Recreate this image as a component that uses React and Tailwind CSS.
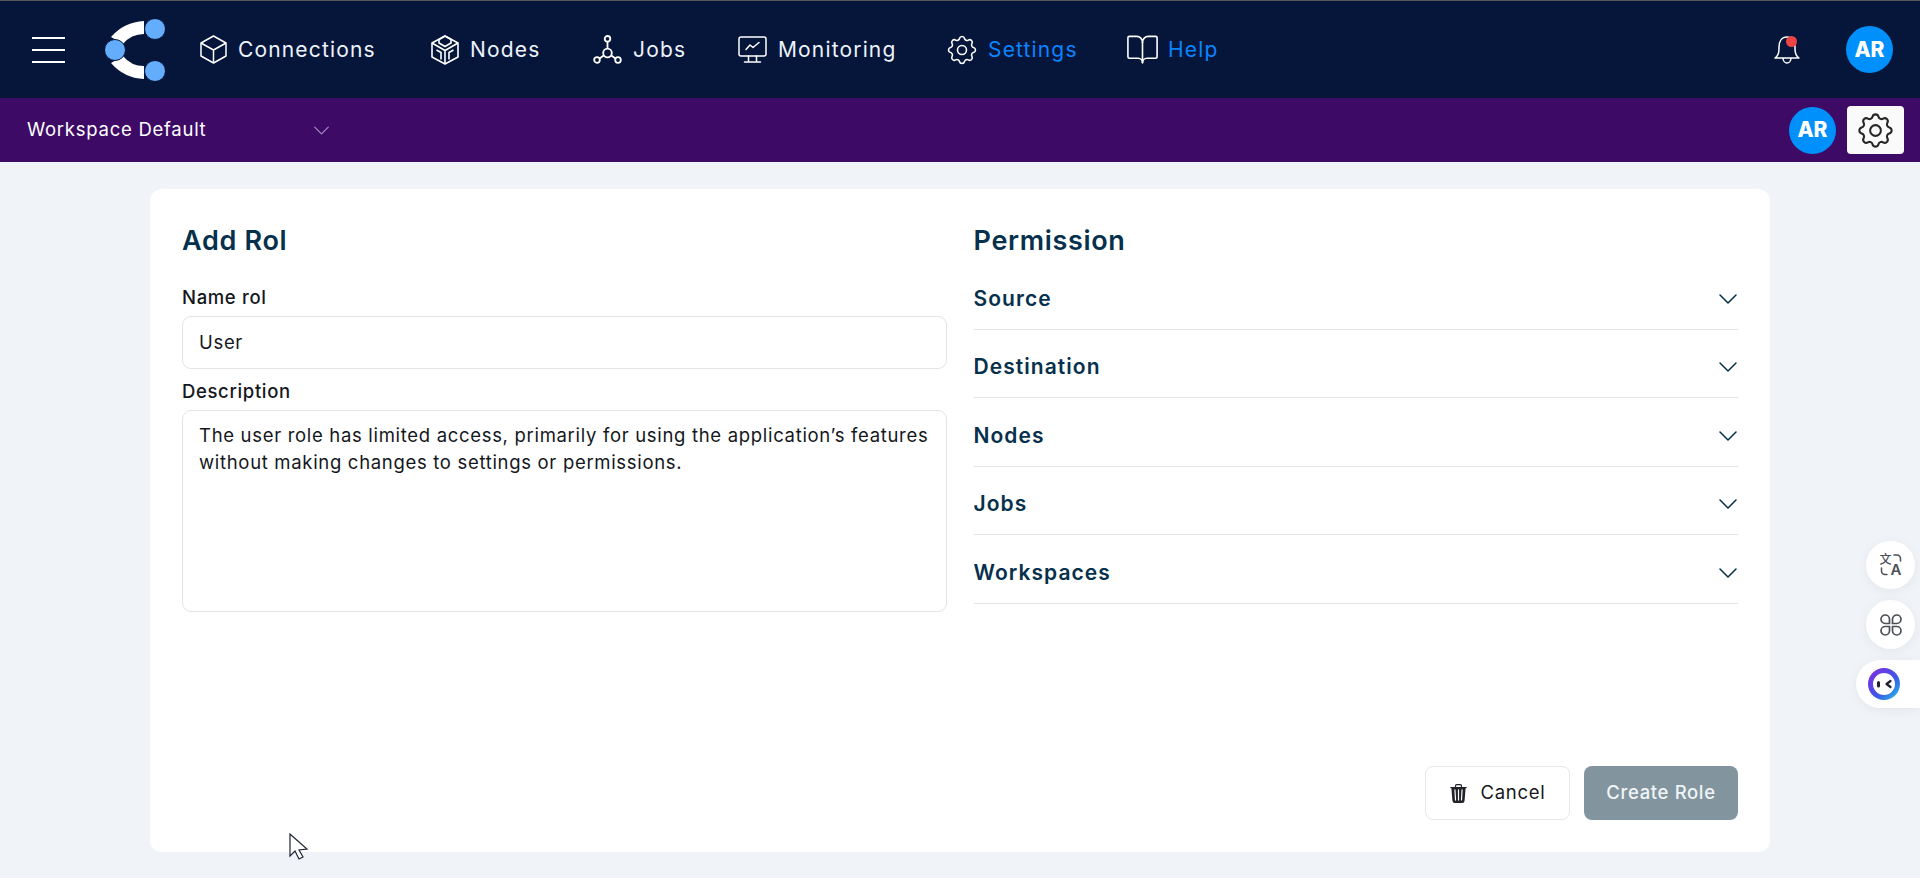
import { ChevronDown } from "lucide-react";
import { TbSettings } from "react-icons/tb";
import { LuBookOpen } from "react-icons/lu";
import { BsTrash3Fill } from "react-icons/bs";

const font = { fontFamily: "Inter, sans-serif" };

function CubeIcon() {
  return (
    <svg width="27" height="29" viewBox="0 0 27 29" fill="none" stroke="white" strokeWidth="1.500" strokeLinejoin="round">
      <path d="M13.500 1 26 8v13l-12.500 7L1 21V8z" />
      <path d="M1 8l12.500 7L26 8M13.500 15v13" />
    </svg>
  );
}

function NodesIcon() {
  return (
    <svg width="28" height="30" viewBox="0 0 28 30" fill="none" stroke="white" strokeWidth="1.600" strokeLinejoin="round">
      <path d="M14 1 27 8v14l-13 7L1 22V8z" />
      <path d="M14 1 8 4.500v3.500l6 3.500 6-3.500V4.500z" />
      <path d="M1 8l13 7.500L27 8M14 15.500V29" />
      <path d="M5.500 15l4.500 2.500v7M22.500 15 18 17.500v7" />
    </svg>
  );
}

function JobsIcon() {
  return (
    <svg width="29" height="29" viewBox="0 0 29 29" fill="none" stroke="white" strokeWidth="1.800">
      <circle cx="14.500" cy="3.800" r="2.800" />
      <circle cx="14.500" cy="18" r="4.300" />
      <circle cx="4" cy="25" r="2.800" />
      <circle cx="25" cy="25" r="2.800" />
      <path d="M14.500 6.600V13.700M10.700 20.500 6.500 23.500M18.300 20.500 22.500 23.500" />
    </svg>
  );
}

function MonitorIcon() {
  return (
    <svg width="29" height="27" viewBox="0 0 29 27" fill="none" stroke="white" strokeWidth="1.500" strokeLinejoin="round" strokeLinecap="round">
      <rect x="1" y="1" width="27" height="19" rx="2" />
      <path d="M8 13.500l4-4.500 3 2.500 6-5" />
      <path d="M10.500 20v6M18.500 20v6M6.500 26h16" />
    </svg>
  );
}

function BellIcon() {
  return (
    <svg width="26" height="30" viewBox="0 0 26 30" fill="none" stroke="white" strokeWidth="1.500" strokeLinejoin="round">
      <path d="M1 23h24c-3-2-4-5-4-9v-2c0-6-3-10-8-10S5 6 5 12v2c0 4-1 7-4 9z" />
      <path d="M9 23c0 3 2 5 4 5s4-2 4-5" />
    </svg>
  );
}

function NavItem({ icon, label, width, active }) {
  return (
    <div className="flex items-center gap-[11px]">
      {icon}
      <span className={`whitespace-nowrap text-[21px] tracking-[0.055em] ${width} ${active ? "text-[#0a84ff]" : "text-[#eef3fb]"}`}>{label}</span>
    </div>
  );
}

function Logo() {
  return (
    <svg width="60" height="62" viewBox="0 0 60 62" fill="none">
      <path d="M6 18Q19 3 39 2L39 15Q26 15 18 25z" fill="white" />
      <path d="M6 44Q19 59 39 60L39 47Q26 47 18 37z" fill="white" />
      <circle cx="10" cy="31" r="10.500" fill="#63adfc" stroke="#05163a" strokeWidth="1" />
      <circle cx="50" cy="10" r="10.500" fill="#63adfc" stroke="#05163a" strokeWidth="1" />
      <circle cx="50" cy="52" r="10.500" fill="#63adfc" stroke="#05163a" strokeWidth="1" />
    </svg>
  );
}

function Avatar() {
  return (
    <div className="flex h-[47px] w-[47px] items-center justify-center rounded-full bg-[#0090fb] text-[21px] font-extrabold text-white">
      AR
    </div>
  );
}

function Accordion({ label }) {
  return (
    <div className="flex h-[68.500px] items-end border-b border-[#e2e4e8] pb-[15px]">
      <div className="flex h-[30px] w-full items-center justify-between">
        <span className="text-[21px] font-semibold tracking-[0.05em] text-[#06304c]">{label}</span>
        <ChevronDown size={32} strokeWidth={1.15} className="-mr-[6px] text-[#06304c]" />
      </div>
    </div>
  );
}

function TranslateIcon() {
  return (
    <div className="relative h-[22px] w-[22px] text-[#4b4f57]">
      <span className="absolute left-0 top-[-3px] text-[12px] font-medium leading-[16px]" style={{ fontFamily: '"Noto Sans CJK SC", sans-serif' }}>文</span>
      <span className="absolute bottom-[-2px] right-0 text-[15px] font-semibold leading-[16px]">A</span>
      <svg className="absolute inset-0" width="22" height="22" viewBox="0 0 22 22" fill="none" stroke="#4b4f57" strokeWidth="1.500" strokeLinecap="round">
        <path d="M14 1h3a3.500 3.500 0 0 1 3.500 3.500V7" />
        <path d="M1.500 14v3a3.500 3.500 0 0 0 3.500 3.500H7" />
      </svg>
    </div>
  );
}

function CloverIcon() {
  return (
    <svg width="22" height="22" viewBox="0 0 22 22" fill="none" stroke="#4b4f57" strokeWidth="1.700">
      <path d="M9.500 9.500H5.250A4.250 4.250 0 1 1 9.500 5.250z" />
      <path d="M12.500 9.500V5.250A4.250 4.250 0 1 1 16.750 9.500z" />
      <path d="M9.500 12.500V16.750A4.250 4.250 0 1 1 5.250 12.500z" />
      <path d="M12.500 12.500H16.750A4.250 4.250 0 1 1 12.500 16.750z" />
    </svg>
  );
}

export default function App() {
  return (
    <div className="relative min-h-[878px] overflow-hidden bg-[#f0f4f9]" style={font}>
      <div className="h-px bg-[#555]" />
      <header className="flex h-[97px] items-center bg-[#05163a] pl-[32px] pr-[27px]">
        <div className="flex w-[33px] flex-col gap-[10px]">
          <div className="h-[2px] bg-white" />
          <div className="h-[2px] bg-white" />
          <div className="h-[2px] bg-white" />
        </div>
        <div className="ml-[40px] mr-[35px]">
          <Logo />
        </div>
        <nav className="flex items-center gap-[54px]">
          <NavItem icon={<CubeIcon />} label="Connections" width="w-[139px]" />
          <NavItem icon={<NodesIcon />} label="Nodes" width="w-[69px]" />
          <NavItem icon={<JobsIcon />} label="Jobs" width="w-[51px]" />
          <NavItem icon={<MonitorIcon />} label="Monitoring" width="w-[115px]" />
          <NavItem icon={<TbSettings size={36} color="white" strokeWidth={1.05} className="-mx-[3px]" />} label="Settings" width="w-[86px]" active />
          <NavItem icon={<LuBookOpen size={35} color="white" strokeWidth={1.1} className="-mx-[3px]" />} label="Help" width="w-[48px]" active />
        </nav>
        <div className="ml-auto flex items-center gap-[46px]">
          <div className="relative">
            <BellIcon />
            <div className="absolute left-[12px] top-[1px] h-[11px] w-[11px] rounded-full bg-[#ef4444]" />
          </div>
          <Avatar />
        </div>
      </header>

      <div className="flex h-[64px] items-center bg-[#3d0a66] pl-[27px] pr-[16px]">
        <span className="w-[281px] text-[18.500px] tracking-[0.04em] text-white">Workspace Default</span>
        <ChevronDown size={27} strokeWidth={1.1} className="text-[#a48abf]" />
        <div className="ml-auto flex items-center gap-[11px]">
          <Avatar />
          <div className="flex h-[48px] w-[57px] items-center justify-center rounded-[4px] bg-[#fafafa]">
            <TbSettings size={43} color="#27272a" strokeWidth={1.15} />
          </div>
        </div>
      </div>

      <main className="mx-[150px] mt-[27px] flex h-[663px] flex-col rounded-[12px] bg-white px-[32px] pb-[32px] pt-[28px]">
        <div className="grid flex-1 grid-cols-2 gap-[27px]">
          <section>
            <h2 className="text-[27px] font-semibold leading-[48px] tracking-[0.025em] text-[#06304c]">Add Rol</h2>
            <label className="mt-[17px] block text-[18.500px] font-medium leading-[30px] tracking-[0.035em] text-[#14171c]">Name rol</label>
            <div className="mt-[4px] flex h-[53px] items-center rounded-[9px] border border-[#e2e4e8] px-[16px] text-[18.500px] tracking-[0.037em] text-[#14171c]">
              User
            </div>
            <label className="mt-[7px] block text-[18.500px] font-medium leading-[30px] tracking-[0.035em] text-[#14171c]">Description</label>
            <div className="mt-[4px] h-[202px] rounded-[9px] border border-[#e2e4e8] px-[16px] py-[11px] text-[18.500px] leading-[27px] tracking-[0.037em] text-[#14171c]">
              The user role has limited access, primarily for using the application’s features without making changes to settings or permissions.
            </div>
          </section>
          <section>
            <h2 className="h-[44px] text-[27px] font-semibold leading-[48px] tracking-[0.025em] text-[#06304c]">Permission</h2>
            <Accordion label="Source" />
            <Accordion label="Destination" />
            <Accordion label="Nodes" />
            <Accordion label="Jobs" />
            <Accordion label="Workspaces" />
          </section>
        </div>
        <div className="flex justify-end gap-[14px]">
          <button className="flex h-[54px] w-[145px] items-center justify-center gap-[12px] rounded-[8px] border border-[#e5e7eb] text-[18.500px] tracking-[0.04em] text-[#14171c]">
            <BsTrash3Fill size={19} className="text-[#1f2328]" />
            Cancel
          </button>
          <button className="h-[54px] w-[154px] rounded-[8px] bg-[#82959f] text-[18.500px] font-medium tracking-[0.035em] text-[#f0f4f6]">
            Create Role
          </button>
        </div>
      </main>

      {/* floating helpers on the right edge */}
      <div className="absolute right-[5px] top-[541px] flex h-[48px] w-[49px] items-center justify-center rounded-full bg-white shadow-[0_2px_12px_rgba(0,0,0,0.06)]">
        <TranslateIcon />
      </div>
      <div className="absolute right-[5px] top-[600px] flex h-[49px] w-[49px] items-center justify-center rounded-full bg-white shadow-[0_2px_12px_rgba(0,0,0,0.06)]">
        <CloverIcon />
      </div>
      <div className="absolute right-0 top-[660px] flex h-[48px] w-[64px] items-center rounded-l-full bg-white pl-[12px] shadow-[0_2px_12px_rgba(0,0,0,0.06)]">
        <svg width="32" height="32" viewBox="0 0 32 32" fill="none">
          <defs>
            <linearGradient id="assistant-ring" x1="0" y1="0" x2="1" y2="1">
              <stop offset="0" stopColor="#7b2fe0" />
              <stop offset="0.6" stopColor="#3f55e8" />
              <stop offset="1" stopColor="#22b8e8" />
            </linearGradient>
          </defs>
          <circle cx="16" cy="16" r="13.500" stroke="url(#assistant-ring)" strokeWidth="5" />
          <rect x="9" y="13" width="3" height="6.500" rx="1.500" fill="#1f1f2e" />
          <path d="M22.500 13 18.500 16l4 3" stroke="#1f1f2e" strokeWidth="2.200" strokeLinecap="round" strokeLinejoin="round" />
        </svg>
      </div>

      {/* mouse pointer caught in the capture */}
      <svg className="absolute left-[289px] top-[833px]" width="20" height="28" viewBox="0 0 20 28" fill="white" stroke="#1c2233" strokeWidth="1.200">
        <path d="M1 1v22l5-5 4 8 4-2-4-7 8-1z" />
      </svg>
    </div>
  );
}
